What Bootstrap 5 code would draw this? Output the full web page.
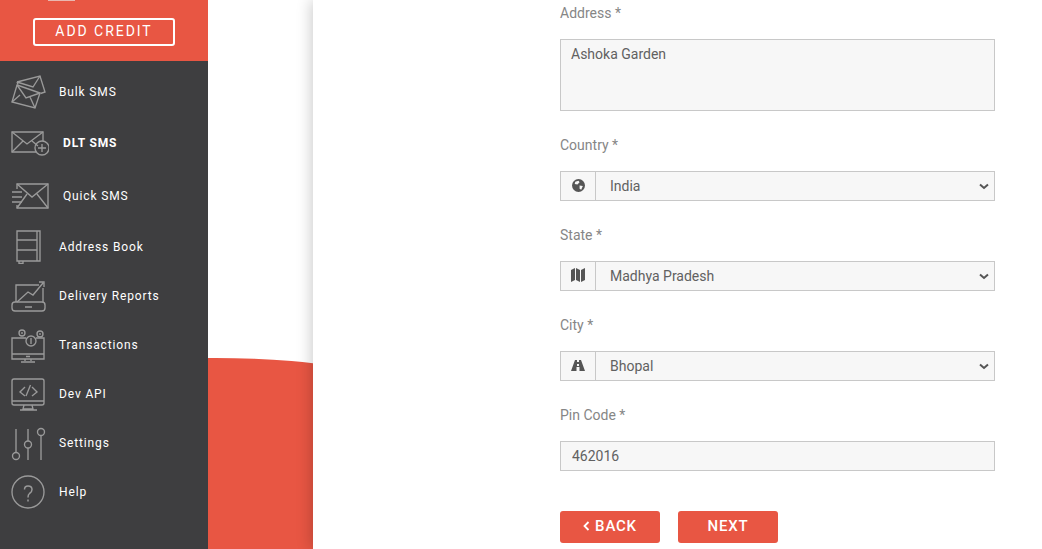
<!DOCTYPE html>
<html lang="en">
<head>
<meta charset="utf-8">
<title>Profile</title>
<link href="https://cdn.jsdelivr.net/npm/bootstrap@5.3.0/dist/css/bootstrap.min.css" rel="stylesheet">
<style>
html,body{height:549px;overflow:hidden;}
body{font-family:Roboto,"Liberation Sans",sans-serif;background:#fff;color:#616161;}
.shell{height:549px;}
.side{width:208px;flex:none;background:#3e3e40;height:549px;}
.side-top{height:61px;background:#e85643;padding-top:18px;position:relative;}
.side-top::before{content:"";position:absolute;left:48px;top:0;width:27px;height:1px;background:#e9b7b0;}
.credit{display:block;width:142px;height:28px;margin-left:33px;border:2px solid #fff;border-radius:3px;color:#fff;font-size:14px;letter-spacing:1.95px;line-height:23px;text-align:center;text-decoration:none;font-weight:400;}
.menu-row{position:relative;display:flex;align-items:center;color:#fff;font-size:12px;letter-spacing:.86px;text-decoration:none;}
.menu-row svg{position:absolute;left:11px;fill:none;stroke:#9a9a9a;stroke-width:1.35;}
.menu-row span{margin-left:59px;}
.menu-row.shift span{margin-left:63px;}
.r1{height:61px;}
.r2{height:41px;}
.r3{height:63px;padding-top:3px;}
.r4{height:42px;}
.r5{height:56px;}
.r6{height:42px;}
.r7{height:56px;}
.r8{height:42px;}
.r9{height:56px;}
.gutter{width:105px;flex:none;height:549px;position:relative;overflow:hidden;background:#fff;}
.gutter::after{content:"";position:absolute;left:-193px;top:358px;width:400px;height:300px;background:#e85643;border-radius:50%/40px;}
.panel{flex:1;height:549px;background:#fff;box-shadow:-2px 0 14px rgba(0,0,0,.2);position:relative;z-index:1;padding-left:247px;overflow:hidden;}
.form-wrap{width:435px;}
.lbl{display:block;font-size:14px;color:#868686;line-height:20px;margin:0;}
.fld{background-color:#f7f7f7;border:1px solid #c8c8c8;border-radius:0;color:#616161;font-size:14px;height:30px;padding:0 10px;line-height:28px;box-shadow:none;}
.fld-area{height:72px;padding:4px 10px;resize:none;line-height:20px;margin-top:16px;}
.grp{margin-top:16px;height:30px;flex-wrap:nowrap;}
.grp-ico{width:36px;height:30px;padding:0 0 2px;justify-content:center;background:#f7f7f7;border:1px solid #c8c8c8;border-radius:0;}
.fld-sel{padding:0 30px 0 14px;background-image:url("data:image/svg+xml,%3csvg xmlns='http://www.w3.org/2000/svg' viewBox='0 0 10 7'%3e%3cpath fill='none' stroke='%23555' stroke-width='2' d='M1 1.500L5 5L9 1.500'/%3e%3c/svg%3e");background-position:right 5px center;background-size:10px 7px;border-radius:0 !important;margin-left:-1px !important;}
.gap-a{margin-top:24px;}
.pin-fld{margin-top:16px;padding-left:11px;}
.act{width:100px;height:32px;padding:0 0 2px;background:#e85643;border:0;border-radius:3px;color:#fff;font-size:15px;font-weight:500;letter-spacing:.8px;display:flex;align-items:center;justify-content:center;}
.act:hover{background:#e85643;color:#fff;}
.act svg{margin-right:5px;fill:none;stroke:#fff;stroke-width:1.8;}
.act-row{margin-top:40px;gap:18px;}
.sp-first{margin-top:3px;}
</style>
</head>
<body>
<div class="shell d-flex">
  <aside class="side">
    <div class="side-top"><a class="credit" href="#">ADD CREDIT</a></div>
    <nav class="d-flex flex-column">
      <a class="menu-row r1" href="#"><svg width="36" height="36" viewBox="0 0 36 36"><path d="M6 8L29 2L34 18L29.500 19.500"/><path d="M6 8L7 10.500M6 8L22 13L29 2"/><path d="M6 11L29 19L24 34L1 28Z"/><path d="M6 11L15 24L29 19M1 28L9 21M24 34L19 23"/></svg><span>Bulk SMS</span></a>
      <a class="menu-row shift fw-bold r2" href="#"><svg width="38" height="27" viewBox="0 0 38 27"><path d="M25 23H1V3H32V12"/><path d="M1 3L16 15L32 3M1 23L12 12M21 12L27 17"/><circle cx="31" cy="19" r="7"/><path d="M31 15V23M27 19H35"/></svg><span>DLT SMS</span></a>
      <a class="menu-row shift r3" href="#"><svg width="38" height="26" viewBox="0 0 38 26"><path d="M6 6V1H37V25H6V22"/><path d="M6 1L21 14L37 1M6 25L16 11M37 25L26 11"/><path d="M1 9H11M1 14H11M1 19H11"/></svg><span>Quick SMS</span></a>
      <a class="menu-row r4" href="#"><svg width="30" height="34" viewBox="0 0 30 34"><path d="M6 1H29V31H6Z"/><path d="M26 1V31M6 10H26M6 20H26M8 31V33.500H12V31"/></svg><span>Address Book</span></a>
      <a class="menu-row r5" href="#"><svg width="36" height="32" viewBox="0 0 36 32"><path d="M5 22V5H28M32 8V22"/><path d="M1 25Q1 22 4 22H31Q34 22 34 25V28Q34 31 31 31H4Q1 31 1 28ZM14 27H21"/><path d="M6 22L17 12L22 15L32 3M28 2H33V7"/></svg><span>Delivery Reports</span></a>
      <a class="menu-row r6" href="#"><svg width="36" height="36" viewBox="0 0 36 36"><path d="M15 11H1V32H33V11H25M1 27H33M14 32V34M20 32V34M10 35H24M15 29.500H19"/><circle cx="20" cy="14" r="5"/><circle cx="11" cy="6" r="3"/><circle cx="29" cy="7" r="3"/><path d="M20 11V17M11 5V7M29 6V8"/></svg><span>Transactions</span></a>
      <a class="menu-row r7" href="#"><svg width="34" height="33" viewBox="0 0 34 33"><path d="M3 1H31Q33 1 33 3V25Q33 27 31 27H3Q1 27 1 25V3Q1 1 3 1ZM1 23H33"/><path d="M13 27L12 31H22L21 27M9 32H26"/><path d="M14 9L9 14L14 18M21 9L26 14L21 18M19.500 7L15 18"/></svg><span>Dev API</span></a>
      <a class="menu-row r8" href="#"><svg width="36" height="35" viewBox="0 0 36 35"><path d="M5 3V26M17 3V15M17 22V34M30 10V34"/><circle cx="5" cy="30" r="3.500"/><circle cx="17" cy="18.500" r="3.500"/><circle cx="30" cy="6" r="3.500"/></svg><span>Settings</span></a>
      <a class="menu-row r9" href="#"><svg width="34" height="34" viewBox="0 0 34 34"><circle cx="17" cy="17" r="16"/><path d="M13.500 14.500Q13.500 11 17 11Q21 11 21 14.500Q21 17 18.500 18.500Q17 19.500 17 22.500M17 24.500V26.500" stroke-width="1.500"/></svg><span>Help</span></a>
    </nav>
  </aside>
  <div class="gutter"></div>
  <main class="panel">
    <form class="form-wrap sp-first">
      <label class="lbl" for="addr">Address *</label>
      <textarea class="form-control fld fld-area" id="addr">Ashoka Garden</textarea>

      <label class="lbl gap-a" for="cty">Country *</label>
      <div class="input-group grp">
        <span class="input-group-text grp-ico"><svg width="13" height="13" viewBox="0 0 12 12"><circle cx="6" cy="6" r="6" fill="#555"/><path d="M3 2.500L6 1.500L7 3L5 5L2.500 4.500ZM7 6L10 6.500L8.500 10L7 9Z" fill="#f7f7f7"/></svg></span>
        <select class="form-select fld fld-sel" id="cty"><option>India</option></select>
      </div>

      <label class="lbl gap-a" for="sta">State *</label>
      <div class="input-group grp">
        <span class="input-group-text grp-ico"><svg width="14" height="14" viewBox="0 0 14 14"><path d="M0 2L4 0V12L0 14ZM5 0L9 2V14L5 12ZM10 2L14 0V12L10 14Z" fill="#555"/></svg></span>
        <select class="form-select fld fld-sel" id="sta"><option>Madhya Pradesh</option></select>
      </div>

      <label class="lbl gap-a" for="cit">City *</label>
      <div class="input-group grp">
        <span class="input-group-text grp-ico"><svg width="14" height="11" viewBox="0 0 14 11"><path d="M4 0H6V2H8V0H10L14 11H8.500V7H5.500V11H0ZM6 4V6H8V4Z" fill="#555"/></svg></span>
        <select class="form-select fld fld-sel" id="cit"><option>Bhopal</option></select>
      </div>

      <label class="lbl gap-a" for="pin">Pin Code *</label>
      <input class="form-control fld pin-fld" id="pin" value="462016">

      <div class="d-flex act-row">
        <button type="button" class="btn act"><svg width="7" height="10" viewBox="0 0 7 10"><path d="M5.500 1L1.500 5L5.500 9"/></svg>BACK</button>
        <button type="button" class="btn act">NEXT</button>
      </div>
    </form>
  </main>
</div>
<script src="https://cdn.jsdelivr.net/npm/bootstrap@5.3.0/dist/js/bootstrap.bundle.min.js"></script>
</body>
</html>
